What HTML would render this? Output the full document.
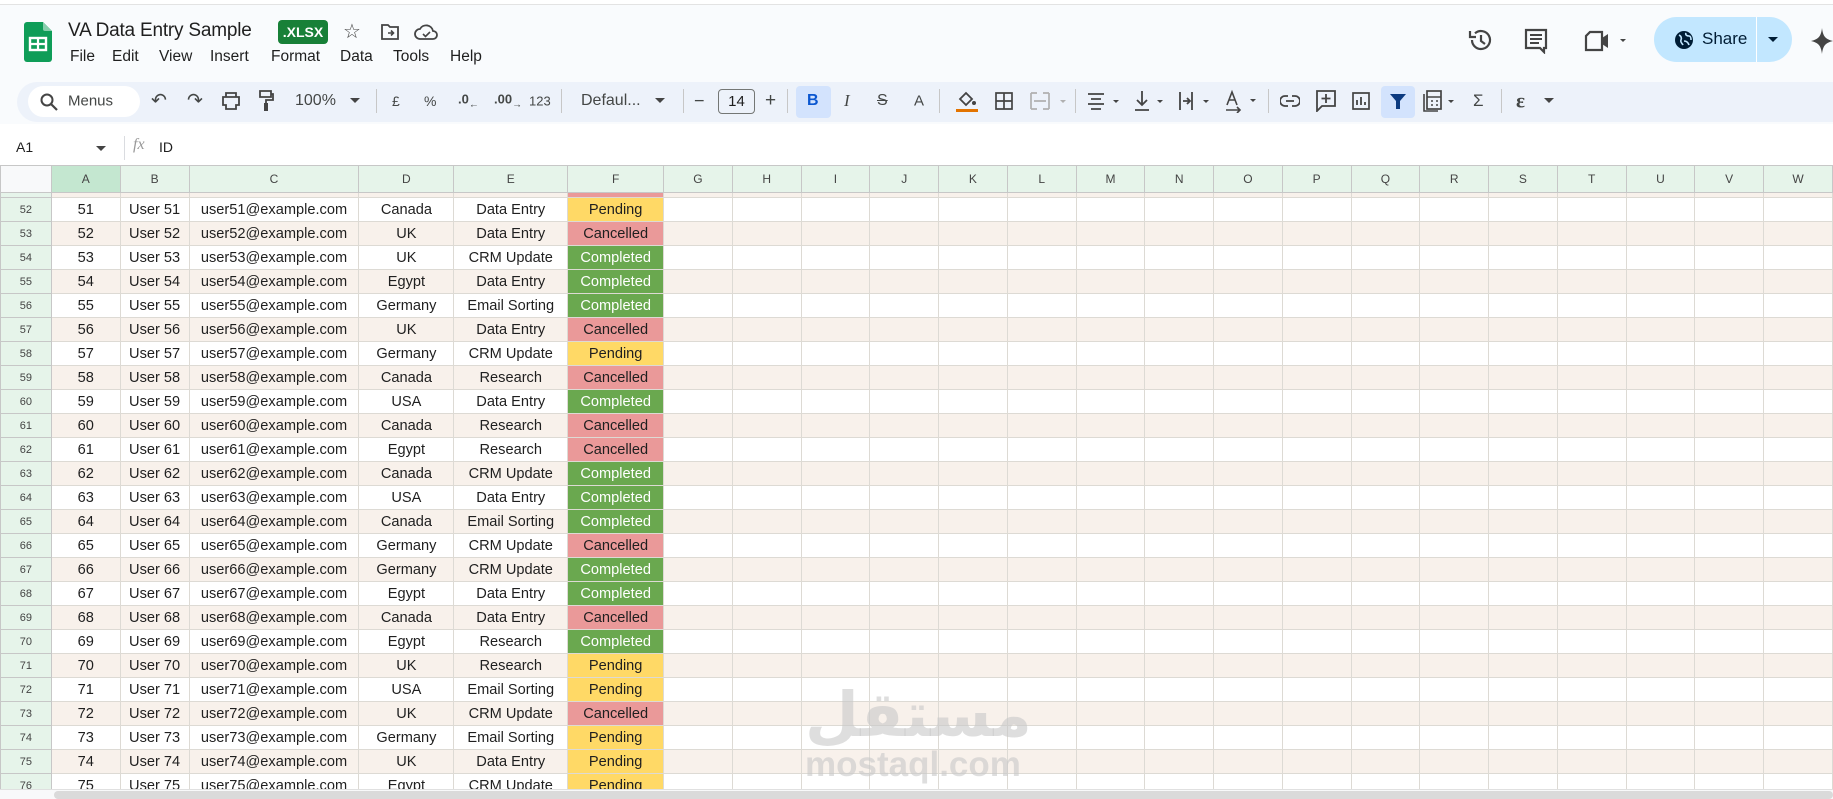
<!DOCTYPE html>
<html><head><meta charset="utf-8"><style>
*{box-sizing:border-box;margin:0;padding:0}
body{width:1833px;height:799px;overflow:hidden;background:#f9fbfd;font-family:"Liberation Sans",sans-serif;position:relative;color:#1f1f1f}
.a{position:absolute;white-space:nowrap}
.tb{font-size:15px;color:#444746;top:101px;transform:translateY(-50%)}
.sep{position:absolute;top:89px;width:1px;height:24px;background:#c7c7c7}
table{position:absolute;left:0;top:165px;border-collapse:collapse;table-layout:fixed;font-size:14.6px}
td{border:1px solid #dddad4;height:24px;text-align:center;padding:0;overflow:hidden;white-space:nowrap;line-height:22px}
tr.o td{background:#f8f1eb}
tr.w td{background:#fff}
tr.p td{height:5px;line-height:0;font-size:0}
td.r{background:#e6f4ea!important;color:#444;font-size:11px;border-color:#c7c7c7}
tr.p td.r{font-size:0}
tr.h td{background:#e6f4ea;color:#444;font-size:12px;height:27px;border-color:#c7c7c7}
.P{background:#ffd966!important}
.C{background:#ea9999!important}
.G{background:#6aa84f!important;color:#fff}
.m{position:absolute;top:48px;font-size:15.5px}
</style></head><body>
<div class="a" style="left:0;top:0;width:1833px;height:5px;background:#fff;border-bottom:1px solid #e3e3e3"></div>
<svg class="a" style="left:24px;top:22px" width="28" height="40" viewBox="0 0 28 40"><path d="M3 0h16l9 9v28a3 3 0 0 1-3 3H3a3 3 0 0 1-3-3V3a3 3 0 0 1 3-3z" fill="#0f9d58"/><path d="M19 0l9 9h-7a2 2 0 0 1-2-2z" fill="#87ceac"/><rect x="6" y="16" width="16" height="12" fill="none" stroke="#fff" stroke-width="2.4"/><path d="M6 22h16M14 16v12" stroke="#fff" stroke-width="2.2"/></svg>
<div class="a" style="left:68px;top:20px;font-size:19px;color:#1f1f1f;letter-spacing:-0.2px">VA Data Entry Sample</div>
<div class="a" style="left:278px;top:20px;width:50px;height:24px;background:#188038;color:#fff;border-radius:4px;font-size:14px;font-weight:bold;line-height:24px;text-align:center">.XLSX</div>
<div class="a" style="left:343px;top:19px;font-size:20px;color:#444">☆</div>
<svg class="a" style="left:380px;top:23px" width="20" height="18" viewBox="0 0 20 18"><path d="M2 2h6l2 2h8v12H2z" fill="none" stroke="#444" stroke-width="1.8"/><path d="M8 10h5M11 7.5l2.5 2.5L11 12.5" fill="none" stroke="#444" stroke-width="1.6"/></svg>
<svg class="a" style="left:414px;top:22px" width="24" height="20" viewBox="0 0 24 20"><path d="M6 17a5 5 0 0 1 0-10 7 7 0 0 1 13 2 4 4 0 0 1 0 8z" fill="none" stroke="#444" stroke-width="1.8"/><path d="M9 12l2.5 2.5L16 10" fill="none" stroke="#444" stroke-width="1.6"/></svg>
<div class="m" style="left:70px">File</div>
<div class="m" style="left:112px">Edit</div>
<div class="m" style="left:159px">View</div>
<div class="m" style="left:210px">Insert</div>
<div class="m" style="left:271px">Format</div>
<div class="m" style="left:340px">Data</div>
<div class="m" style="left:393px">Tools</div>
<div class="m" style="left:450px">Help</div>
<svg class="a" style="left:1468px;top:27px" width="26" height="26" viewBox="0 0 26 26"><path d="M4 13a9 9 0 1 0 3-6.7" fill="none" stroke="#444" stroke-width="2.2"/><path d="M2 4v6h6" fill="none" stroke="#444" stroke-width="2.2"/><path d="M13 8v6l4 3" fill="none" stroke="#444" stroke-width="2.2"/></svg>
<svg class="a" style="left:1524px;top:28px" width="24" height="26" viewBox="0 0 24 26"><path d="M2 2h20v18h-2v4l-4-4H2z" fill="none" stroke="#444" stroke-width="2.2"/><path d="M6 7h12M6 11h12M6 15h9" stroke="#444" stroke-width="2"/></svg>
<svg class="a" style="left:1584px;top:30px" width="42" height="22" viewBox="0 0 42 22"><path d="M6 2h12v18H2V6z" fill="none" stroke="#444" stroke-width="2.2"/><path d="M18 8l6-4v14l-6-4" fill="#444"/><path d="M36 9l3 3 3-3z" fill="#444"/></svg>
<div class="a" style="left:1654px;top:17px;width:138px;height:45px;background:#c2e7ff;border-radius:23px"></div>
<div class="a" style="left:1756px;top:17px;width:1px;height:45px;background:#fff"></div>
<svg class="a" style="left:1674px;top:30px" width="20" height="20" viewBox="0 0 20 20"><circle cx="10" cy="10" r="9" fill="#001d35"/><path d="M5 5c2 1 3 3 2 5s1 3 2 5M12 3c-1 2 1 3 3 3s2 3 2 4M10 11c2 0 4 1 5 4" fill="none" stroke="#c2e7ff" stroke-width="1.6"/></svg>
<div class="a" style="left:1702px;top:29px;font-size:17px;color:#001d35">Share</div>
<svg class="a" style="left:1768px;top:37px" width="10" height="6"><path d="M0 0h10L5 5z" fill="#001d35"/></svg>
<svg class="a" style="left:1811px;top:28px" width="22" height="26" viewBox="0 0 22 26"><path d="M11 0C12 8 14 11 22 13 14 15 12 18 11 26 10 18 8 15 0 13 8 11 10 8 11 0z" fill="#444"/></svg>
<div class="a" style="left:17px;top:82px;width:1816px;height:40px;background:#edf2fa;border-radius:20px 0 0 20px"></div>
<div class="a" style="left:28px;top:86px;width:112px;height:31px;background:#fff;border-radius:16px"></div>
<svg class="a" style="left:40px;top:93px" width="18" height="18" viewBox="0 0 18 18"><circle cx="7" cy="7" r="5.5" fill="none" stroke="#444" stroke-width="2"/><path d="M11 11l6 6" stroke="#444" stroke-width="2.2"/></svg>
<div class="a tb" style="left:68px;font-size:15px">Menus</div>
<div class="a tb" style="left:151px;font-size:19px">↶</div>
<div class="a tb" style="left:187px;font-size:19px">↷</div>
<svg class="a" style="left:221px;top:92px" width="20" height="18" viewBox="0 0 20 18"><path d="M5 1h10v4H5zM2 5h16v8h-3v4H5v-4H2z" fill="none" stroke="#444" stroke-width="1.8"/></svg>
<svg class="a" style="left:258px;top:90px" width="16" height="22" viewBox="0 0 16 22"><path d="M2 1h11v6H2zM13 4h2v6H8v4" fill="none" stroke="#444" stroke-width="1.8"/><rect x="6" y="13" width="4" height="8" fill="#444"/></svg>
<div class="a tb" style="left:295px;font-size:16px">100%</div>
<svg class="a" style="left:350px;top:98px" width="10" height="6"><path d="M0 0h10L5 5z" fill="#444"/></svg>
<div class="sep" style="left:376px"></div>
<div class="a tb" style="left:392px;font-size:14px">£</div>
<div class="a tb" style="left:424px;font-size:14px">%</div>
<div class="a tb" style="left:458px;font-size:13px;font-weight:bold">.0<sub style="font-size:10px">←</sub></div>
<div class="a tb" style="left:494px;font-size:13px;font-weight:bold">.00<sub style="font-size:10px">→</sub></div>
<div class="a tb" style="left:529px;font-size:13px">123</div>
<div class="sep" style="left:561px"></div>
<div class="a tb" style="left:581px;font-size:16px">Defaul...</div>
<svg class="a" style="left:655px;top:98px" width="10" height="6"><path d="M0 0h10L5 5z" fill="#444"/></svg>
<div class="sep" style="left:683px"></div>
<div class="a tb" style="left:694px;font-size:18px">−</div>
<div class="a" style="left:718px;top:89px;width:37px;height:25px;border:1px solid #747775;border-radius:4px;font-size:15px;text-align:center;line-height:23px">14</div>
<div class="a tb" style="left:765px;font-size:19px">+</div>
<div class="sep" style="left:787px"></div>
<div class="a" style="left:796px;top:86px;width:35px;height:32px;background:#d3e3fd;border-radius:4px"></div>
<div class="a tb" style="left:807px;font-size:16px;font-weight:bold;color:#0b57d0">B</div>
<div class="a tb" style="left:844px;font-size:17px;font-style:italic;font-family:'Liberation Serif',serif">I</div>
<div class="a tb" style="left:877px;font-size:16px;text-decoration:line-through">S</div>
<div class="a tb" style="left:914px;font-size:15px">A</div>
<div class="sep" style="left:939px"></div>
<svg class="a" style="left:955px;top:89px" width="24" height="24" viewBox="0 0 24 24"><path d="M5 10l6-6 6 6-6 6z" fill="none" stroke="#444" stroke-width="1.8"/><circle cx="19" cy="14" r="2" fill="#444"/><rect x="1" y="20" width="22" height="3" fill="#e37400"/></svg>
<svg class="a" style="left:995px;top:92px" width="18" height="18" viewBox="0 0 18 18"><path d="M1 1h16v16H1zM9 1v16M1 9h16" fill="none" stroke="#444" stroke-width="1.7"/></svg>
<svg class="a" style="left:1030px;top:92px" width="40" height="18" viewBox="0 0 40 18"><path d="M1 1h6M1 17h6M1 1v16M19 1h-6M19 17h-6M19 1v16M4 9h12" fill="none" stroke="#b0b0b0" stroke-width="1.7"/><path d="M30 8l3 3 3-3z" fill="#b0b0b0"/></svg>
<div class="sep" style="left:1075px"></div>
<svg class="a" style="left:1087px;top:92px" width="36" height="18" viewBox="0 0 36 18"><path d="M1 2h16M4 7h10M1 12h16M4 17h10" stroke="#444" stroke-width="1.8"/><path d="M26 8l3 3 3-3z" fill="#444"/></svg>
<svg class="a" style="left:1134px;top:90px" width="36" height="22" viewBox="0 0 36 22"><path d="M8 1v14M3 10l5 5 5-5M1 20h14" fill="none" stroke="#444" stroke-width="1.8"/><path d="M23 10l3 3 3-3z" fill="#444"/></svg>
<svg class="a" style="left:1178px;top:90px" width="36" height="22" viewBox="0 0 36 22"><path d="M2 2v18M14 2v18M5 11h7M9 8l3 3-3 3" fill="none" stroke="#444" stroke-width="1.8"/><path d="M25 10l3 3 3-3z" fill="#444"/></svg>
<svg class="a" style="left:1225px;top:89px" width="36" height="24" viewBox="0 0 36 24"><path d="M2 16L7 3l5 13M4 11h6M1 21h14M12 18l3 3-3 3" fill="none" stroke="#444" stroke-width="1.6"/><path d="M25 10l3 3 3-3z" fill="#444"/></svg>
<div class="sep" style="left:1268px"></div>
<svg class="a" style="left:1280px;top:95px" width="20" height="12" viewBox="0 0 20 12"><path d="M8 1H5a5 5 0 0 0 0 10h3M12 1h3a5 5 0 0 1 0 10h-3M6 6h8" fill="none" stroke="#444" stroke-width="1.8"/></svg>
<svg class="a" style="left:1316px;top:90px" width="20" height="22" viewBox="0 0 20 22"><path d="M1 1h18v15H6l-5 5z" fill="none" stroke="#444" stroke-width="1.8"/><path d="M10 4v9M5.5 8.5h9" stroke="#444" stroke-width="1.8"/></svg>
<svg class="a" style="left:1352px;top:92px" width="18" height="18" viewBox="0 0 18 18"><path d="M1 1h16v16H1z" fill="none" stroke="#444" stroke-width="1.7"/><path d="M5 13V8M9 13V5M13 13v-3" stroke="#444" stroke-width="1.8"/></svg>
<div class="a" style="left:1381px;top:86px;width:34px;height:32px;background:#d3e3fd;border-radius:4px"></div>
<svg class="a" style="left:1389px;top:92px" width="18" height="18" viewBox="0 0 18 18"><path d="M1 2h16l-6 7v8H7V9z" fill="#0b3a80"/></svg>
<svg class="a" style="left:1422px;top:90px" width="38" height="22" viewBox="0 0 38 22"><path d="M2 4v17h14" fill="none" stroke="#444" stroke-width="1.6"/><rect x="5" y="1" width="14" height="18" fill="none" stroke="#444" stroke-width="1.7"/><path d="M5 7h14M9 11h2M14 11h2M9 15h2M14 15h2" stroke="#444" stroke-width="1.6"/><path d="M26 10l3 3 3-3z" fill="#444"/></svg>
<div class="a tb" style="left:1473px;font-size:17px">Σ</div>
<div class="sep" style="left:1501px"></div>
<div class="a tb" style="left:1516px;font-size:21px;font-weight:bold;font-family:'Liberation Serif',serif">ε</div>
<svg class="a" style="left:1544px;top:98px" width="10" height="6"><path d="M0 0h10L5 5z" fill="#444"/></svg>
<div class="a" style="left:0;top:124px;width:1833px;height:41px;background:#fff"></div>
<div class="a" style="left:16px;top:139px;font-size:14px">A1</div>
<svg class="a" style="left:96px;top:146px" width="10" height="6"><path d="M0 0h10L5 5z" fill="#444"/></svg>
<div class="a" style="left:124px;top:136px;width:1px;height:24px;background:#dadce0"></div>
<div class="a" style="left:133px;top:136px;font-size:16px;font-style:italic;color:#999;font-family:'Liberation Serif',serif">fx</div>
<div class="a" style="left:159px;top:139px;font-size:14px">ID</div>
<table>
<colgroup><col style="width:51px"><col style="width:69px"><col style="width:69px"><col style="width:170px"><col style="width:95px"><col style="width:114px"><col style="width:96px"><col span="17" style="width:69px"></colgroup>
<tr class="h"><td style="background:#f8f9fa"></td><td style="background:#c4e7d0">A</td><td>B</td><td>C</td><td>D</td><td>E</td><td>F</td><td>G</td><td>H</td><td>I</td><td>J</td><td>K</td><td>L</td><td>M</td><td>N</td><td>O</td><td>P</td><td>Q</td><td>R</td><td>S</td><td>T</td><td>U</td><td>V</td><td>W</td></tr>
<tr class="o p"><td class="r"></td><td></td><td></td><td></td><td></td><td></td><td class="C"></td><td></td><td></td><td></td><td></td><td></td><td></td><td></td><td></td><td></td><td></td><td></td><td></td><td></td><td></td><td></td><td></td><td></td></tr>
<tr class="w"><td class="r">52</td><td>51</td><td>User 51</td><td>user51@example.com</td><td>Canada</td><td>Data Entry</td><td class="P">Pending</td><td></td><td></td><td></td><td></td><td></td><td></td><td></td><td></td><td></td><td></td><td></td><td></td><td></td><td></td><td></td><td></td><td></td></tr>
<tr class="o"><td class="r">53</td><td>52</td><td>User 52</td><td>user52@example.com</td><td>UK</td><td>Data Entry</td><td class="C">Cancelled</td><td></td><td></td><td></td><td></td><td></td><td></td><td></td><td></td><td></td><td></td><td></td><td></td><td></td><td></td><td></td><td></td><td></td></tr>
<tr class="w"><td class="r">54</td><td>53</td><td>User 53</td><td>user53@example.com</td><td>UK</td><td>CRM Update</td><td class="G">Completed</td><td></td><td></td><td></td><td></td><td></td><td></td><td></td><td></td><td></td><td></td><td></td><td></td><td></td><td></td><td></td><td></td><td></td></tr>
<tr class="o"><td class="r">55</td><td>54</td><td>User 54</td><td>user54@example.com</td><td>Egypt</td><td>Data Entry</td><td class="G">Completed</td><td></td><td></td><td></td><td></td><td></td><td></td><td></td><td></td><td></td><td></td><td></td><td></td><td></td><td></td><td></td><td></td><td></td></tr>
<tr class="w"><td class="r">56</td><td>55</td><td>User 55</td><td>user55@example.com</td><td>Germany</td><td>Email Sorting</td><td class="G">Completed</td><td></td><td></td><td></td><td></td><td></td><td></td><td></td><td></td><td></td><td></td><td></td><td></td><td></td><td></td><td></td><td></td><td></td></tr>
<tr class="o"><td class="r">57</td><td>56</td><td>User 56</td><td>user56@example.com</td><td>UK</td><td>Data Entry</td><td class="C">Cancelled</td><td></td><td></td><td></td><td></td><td></td><td></td><td></td><td></td><td></td><td></td><td></td><td></td><td></td><td></td><td></td><td></td><td></td></tr>
<tr class="w"><td class="r">58</td><td>57</td><td>User 57</td><td>user57@example.com</td><td>Germany</td><td>CRM Update</td><td class="P">Pending</td><td></td><td></td><td></td><td></td><td></td><td></td><td></td><td></td><td></td><td></td><td></td><td></td><td></td><td></td><td></td><td></td><td></td></tr>
<tr class="o"><td class="r">59</td><td>58</td><td>User 58</td><td>user58@example.com</td><td>Canada</td><td>Research</td><td class="C">Cancelled</td><td></td><td></td><td></td><td></td><td></td><td></td><td></td><td></td><td></td><td></td><td></td><td></td><td></td><td></td><td></td><td></td><td></td></tr>
<tr class="w"><td class="r">60</td><td>59</td><td>User 59</td><td>user59@example.com</td><td>USA</td><td>Data Entry</td><td class="G">Completed</td><td></td><td></td><td></td><td></td><td></td><td></td><td></td><td></td><td></td><td></td><td></td><td></td><td></td><td></td><td></td><td></td><td></td></tr>
<tr class="o"><td class="r">61</td><td>60</td><td>User 60</td><td>user60@example.com</td><td>Canada</td><td>Research</td><td class="C">Cancelled</td><td></td><td></td><td></td><td></td><td></td><td></td><td></td><td></td><td></td><td></td><td></td><td></td><td></td><td></td><td></td><td></td><td></td></tr>
<tr class="w"><td class="r">62</td><td>61</td><td>User 61</td><td>user61@example.com</td><td>Egypt</td><td>Research</td><td class="C">Cancelled</td><td></td><td></td><td></td><td></td><td></td><td></td><td></td><td></td><td></td><td></td><td></td><td></td><td></td><td></td><td></td><td></td><td></td></tr>
<tr class="o"><td class="r">63</td><td>62</td><td>User 62</td><td>user62@example.com</td><td>Canada</td><td>CRM Update</td><td class="G">Completed</td><td></td><td></td><td></td><td></td><td></td><td></td><td></td><td></td><td></td><td></td><td></td><td></td><td></td><td></td><td></td><td></td><td></td></tr>
<tr class="w"><td class="r">64</td><td>63</td><td>User 63</td><td>user63@example.com</td><td>USA</td><td>Data Entry</td><td class="G">Completed</td><td></td><td></td><td></td><td></td><td></td><td></td><td></td><td></td><td></td><td></td><td></td><td></td><td></td><td></td><td></td><td></td><td></td></tr>
<tr class="o"><td class="r">65</td><td>64</td><td>User 64</td><td>user64@example.com</td><td>Canada</td><td>Email Sorting</td><td class="G">Completed</td><td></td><td></td><td></td><td></td><td></td><td></td><td></td><td></td><td></td><td></td><td></td><td></td><td></td><td></td><td></td><td></td><td></td></tr>
<tr class="w"><td class="r">66</td><td>65</td><td>User 65</td><td>user65@example.com</td><td>Germany</td><td>CRM Update</td><td class="C">Cancelled</td><td></td><td></td><td></td><td></td><td></td><td></td><td></td><td></td><td></td><td></td><td></td><td></td><td></td><td></td><td></td><td></td><td></td></tr>
<tr class="o"><td class="r">67</td><td>66</td><td>User 66</td><td>user66@example.com</td><td>Germany</td><td>CRM Update</td><td class="G">Completed</td><td></td><td></td><td></td><td></td><td></td><td></td><td></td><td></td><td></td><td></td><td></td><td></td><td></td><td></td><td></td><td></td><td></td></tr>
<tr class="w"><td class="r">68</td><td>67</td><td>User 67</td><td>user67@example.com</td><td>Egypt</td><td>Data Entry</td><td class="G">Completed</td><td></td><td></td><td></td><td></td><td></td><td></td><td></td><td></td><td></td><td></td><td></td><td></td><td></td><td></td><td></td><td></td><td></td></tr>
<tr class="o"><td class="r">69</td><td>68</td><td>User 68</td><td>user68@example.com</td><td>Canada</td><td>Data Entry</td><td class="C">Cancelled</td><td></td><td></td><td></td><td></td><td></td><td></td><td></td><td></td><td></td><td></td><td></td><td></td><td></td><td></td><td></td><td></td><td></td></tr>
<tr class="w"><td class="r">70</td><td>69</td><td>User 69</td><td>user69@example.com</td><td>Egypt</td><td>Research</td><td class="G">Completed</td><td></td><td></td><td></td><td></td><td></td><td></td><td></td><td></td><td></td><td></td><td></td><td></td><td></td><td></td><td></td><td></td><td></td></tr>
<tr class="o"><td class="r">71</td><td>70</td><td>User 70</td><td>user70@example.com</td><td>UK</td><td>Research</td><td class="P">Pending</td><td></td><td></td><td></td><td></td><td></td><td></td><td></td><td></td><td></td><td></td><td></td><td></td><td></td><td></td><td></td><td></td><td></td></tr>
<tr class="w"><td class="r">72</td><td>71</td><td>User 71</td><td>user71@example.com</td><td>USA</td><td>Email Sorting</td><td class="P">Pending</td><td></td><td></td><td></td><td></td><td></td><td></td><td></td><td></td><td></td><td></td><td></td><td></td><td></td><td></td><td></td><td></td><td></td></tr>
<tr class="o"><td class="r">73</td><td>72</td><td>User 72</td><td>user72@example.com</td><td>UK</td><td>CRM Update</td><td class="C">Cancelled</td><td></td><td></td><td></td><td></td><td></td><td></td><td></td><td></td><td></td><td></td><td></td><td></td><td></td><td></td><td></td><td></td><td></td></tr>
<tr class="w"><td class="r">74</td><td>73</td><td>User 73</td><td>user73@example.com</td><td>Germany</td><td>Email Sorting</td><td class="P">Pending</td><td></td><td></td><td></td><td></td><td></td><td></td><td></td><td></td><td></td><td></td><td></td><td></td><td></td><td></td><td></td><td></td><td></td></tr>
<tr class="o"><td class="r">75</td><td>74</td><td>User 74</td><td>user74@example.com</td><td>UK</td><td>Data Entry</td><td class="P">Pending</td><td></td><td></td><td></td><td></td><td></td><td></td><td></td><td></td><td></td><td></td><td></td><td></td><td></td><td></td><td></td><td></td><td></td></tr>
<tr class="w"><td class="r">76</td><td>75</td><td>User 75</td><td>user75@example.com</td><td>Egypt</td><td>CRM Update</td><td class="P">Pending</td><td></td><td></td><td></td><td></td><td></td><td></td><td></td><td></td><td></td><td></td><td></td><td></td><td></td><td></td><td></td><td></td><td></td></tr>
</table>
<div class="a" style="left:805px;top:678px;font-size:62px;font-weight:bold;color:rgba(200,200,200,0.6);font-family:'Liberation Sans','DejaVu Sans',sans-serif">مستقل</div>
<div class="a" style="left:805px;top:745px;font-size:35px;font-weight:bold;color:rgba(200,200,200,0.6)">mostaql.com</div>
<div class="a" style="left:0;top:789px;width:1833px;height:10px;background:#f8f9fa;border-top:1px solid #e0e0e0"></div>
<div class="a" style="left:54px;top:791px;width:1779px;height:8px;background:#dadada;border-radius:4px"></div>
</body></html>
